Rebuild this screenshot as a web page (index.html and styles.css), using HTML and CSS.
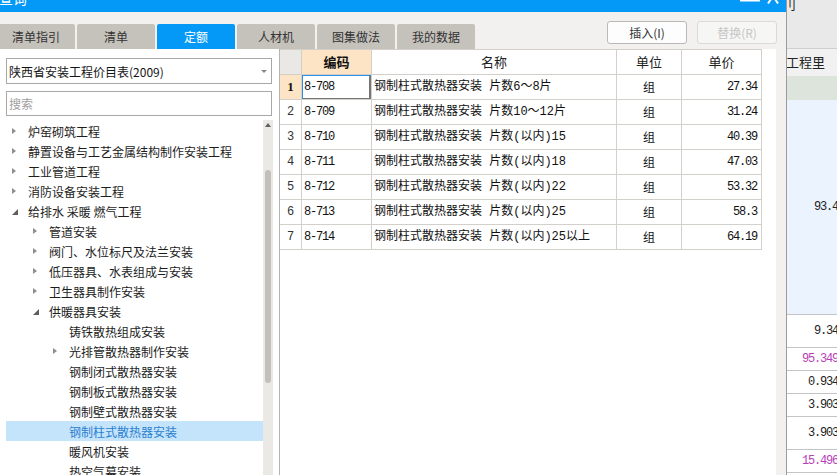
FILE: index.html
```html
<!DOCTYPE html>
<html lang="zh-CN">
<head>
<meta charset="utf-8">
<title>查询</title>
<link rel="stylesheet" href="styles.css">
</head>
<body>
<div class="screen">
  <div class="dialog">
    <div class="titlebar">
      <span class="title">查询</span>
      <svg class="winbtns" width="40" height="12" viewBox="0 0 40 12">
        <rect x="0" y="0" width="20" height="1.5" fill="#fff"/>
        <path d="M33 -4 L28 3.5 M33 -4 L38 3.5" stroke="#fff" stroke-width="2" fill="none"/>
      </svg>
    </div>
    <div class="toolbar">
      <div class="tabs">
        <div class="tab">清单指引</div>
        <div class="tab">清单</div>
        <div class="tab active">定额</div>
        <div class="tab">人材机</div>
        <div class="tab">图集做法</div>
        <div class="tab">我的数据</div>
      </div>
      <div class="actions">
        <button class="btn">插入(I)</button>
        <button class="btn disabled">替换(R)</button>
      </div>
    </div>
    <div class="content">
      <div class="left">
        <div class="select"><span>陕西省安装工程价目表(2009)</span><span class="caret"></span></div>
        <div class="search">搜索</div>
        <div class="treewrap">
          <ul class="tree">
            <li class="l0"><span class="arr"><i class="col"></i></span>炉窑砌筑工程</li>
            <li class="l0"><span class="arr"><i class="col"></i></span>静置设备与工艺金属结构制作安装工程</li>
            <li class="l0"><span class="arr"><i class="col"></i></span>工业管道工程</li>
            <li class="l0"><span class="arr"><i class="col"></i></span>消防设备安装工程</li>
            <li class="l0"><span class="arr"><i class="exp"></i></span>给排水 采暖 燃气工程</li>
            <li class="l1"><span class="arr"><i class="col"></i></span>管道安装</li>
            <li class="l1"><span class="arr"><i class="col"></i></span>阀门、水位标尺及法兰安装</li>
            <li class="l1"><span class="arr"><i class="col"></i></span>低压器具、水表组成与安装</li>
            <li class="l1"><span class="arr"><i class="col"></i></span>卫生器具制作安装</li>
            <li class="l1"><span class="arr"><i class="exp"></i></span>供暖器具安装</li>
            <li class="l2"><span class="arr"></span>铸铁散热组成安装</li>
            <li class="l2"><span class="arr"><i class="col"></i></span>光排管散热器制作安装</li>
            <li class="l2"><span class="arr"></span>钢制闭式散热器安装</li>
            <li class="l2"><span class="arr"></span>钢制板式散热器安装</li>
            <li class="l2"><span class="arr"></span>钢制壁式散热器安装</li>
            <li class="l2 sel"><span class="arr"></span>钢制柱式散热器安装</li>
            <li class="l2"><span class="arr"></span>暖风机安装</li>
            <li class="l2"><span class="arr"></span>热空气幕安装</li>
          </ul>
          <div class="scrollbar"><div class="up"></div><div class="thumb"></div></div>
        </div>
      </div>
      <div class="grid-area">
        <div class="row head">
          <div class="cell corner"></div>
          <div class="cell hcode">编码</div>
          <div class="cell hc">名称</div>
          <div class="cell hc">单位</div>
          <div class="cell hc">单价</div>
        </div>
        <div class="row">
          <div class="cell num cur">1</div>
          <div class="cell code focus">8-708</div>
          <div class="cell name">钢制柱式散热器安装 片数6～8片</div>
          <div class="cell unit">组</div>
          <div class="cell price">27.34</div>
        </div>
        <div class="row">
          <div class="cell num">2</div>
          <div class="cell code">8-709</div>
          <div class="cell name">钢制柱式散热器安装 片数10～12片</div>
          <div class="cell unit">组</div>
          <div class="cell price">31.24</div>
        </div>
        <div class="row">
          <div class="cell num">3</div>
          <div class="cell code">8-710</div>
          <div class="cell name">钢制柱式散热器安装 片数(以内)15</div>
          <div class="cell unit">组</div>
          <div class="cell price">40.39</div>
        </div>
        <div class="row">
          <div class="cell num">4</div>
          <div class="cell code">8-711</div>
          <div class="cell name">钢制柱式散热器安装 片数(以内)18</div>
          <div class="cell unit">组</div>
          <div class="cell price">47.03</div>
        </div>
        <div class="row">
          <div class="cell num">5</div>
          <div class="cell code">8-712</div>
          <div class="cell name">钢制柱式散热器安装 片数(以内)22</div>
          <div class="cell unit">组</div>
          <div class="cell price">53.32</div>
        </div>
        <div class="row">
          <div class="cell num">6</div>
          <div class="cell code">8-713</div>
          <div class="cell name">钢制柱式散热器安装 片数(以内)25</div>
          <div class="cell unit">组</div>
          <div class="cell price">58.3</div>
        </div>
        <div class="row">
          <div class="cell num">7</div>
          <div class="cell code">8-714</div>
          <div class="cell name">钢制柱式散热器安装 片数(以内)25以上</div>
          <div class="cell unit">组</div>
          <div class="cell price">64.19</div>
        </div>
      </div>
    </div>
  </div>
  <div class="bgapp">
    <div class="bg-top"><span class="bg-glyph">刂</span></div>
    <div class="bg-head">工程里</div>
    <div class="bg-green"></div>
    <div class="bg-blue"><span class="val">93.45</span></div>
    <div class="bg-row tall"><span class="val">9.345</span></div>
    <div class="bg-row"><span class="val pink">95.3496</span></div>
    <div class="bg-row"><span class="val">0.9345</span></div>
    <div class="bg-row"><span class="val">3.9035</span></div>
    <div class="bg-row tall"><span class="val">3.9035</span></div>
    <div class="bg-row"><span class="val pink">15.4968</span></div>
    <div class="bg-row"></div>
  </div>
</div>
</body>
</html>
```

FILE: styles.css
```css
html, body {
  margin: 0;
  padding: 0;
  background: #f2f1f0;
}
body {
  font-family: "Noto Sans CJK SC", "Noto Sans", sans-serif;
  font-size: 12px;
  color: #222;
}
.screen {
  width: 837px;
  height: 475px;
  overflow: hidden;
  display: flex;
}
.dialog {
  width: 786px;
  flex: none;
  height: 475px;
  border-right: 1px solid #9b9b9b;
  background: #f2f1f0;
  display: flex;
  flex-direction: column;
}
.titlebar {
  height: 12px;
  flex: none;
  background: #0599f7;
  display: flex;
  overflow: hidden;
}
.title {
  color: #fff;
  font-size: 14px;
  line-height: 14px;
  margin-top: -9px;
  margin-left: -1px;
}
.winbtns {
  margin-left: auto;
  margin-right: 6px;
}
.toolbar {
  height: 37px;
  flex: none;
  display: flex;
  align-items: flex-start;
}
.tabs {
  display: flex;
  gap: 2px;
  margin-left: -3px;
  margin-top: 12px;
}
.tab {
  width: 78px;
  height: 25px;
  line-height: 25px;
  text-align: center;
  background: #c5c2bc;
  border-radius: 2px 2px 0 0;
  color: #333;
  font-size: 12px;
}
.tab.active {
  background: #0599f7;
  color: #fff;
}
.actions {
  margin-left: auto;
  margin-top: 9px;
  margin-right: 9px;
  display: flex;
  gap: 10px;
}
.btn {
  width: 80px;
  height: 23px;
  padding: 0;
  border: 1px solid #b9b9b9;
  border-radius: 3px;
  background: #fdfdfd;
  font-family: "Noto Sans CJK SC", sans-serif;
  font-size: 12px;
  color: #333;
}
.btn.disabled {
  color: #c6c6c6;
  border-color: #dadada;
  background: #f6f6f5;
}
.content {
  flex: 1;
  min-height: 0;
  display: flex;
  padding-right: 10px;
}
.left {
  width: 280px;
  flex: none;
  box-sizing: border-box;
  border-right: 1px solid #b4b4b4;
  background: #fff;
  padding: 9px 6px 0 6px;
  display: flex;
  flex-direction: column;
  overflow: hidden;
}
.select {
  width: 266px;
  height: 26px;
  box-sizing: border-box;
  border: 1px solid #a8a8a8;
  display: flex;
  align-items: center;
  padding-left: 2px;
  color: #141414;
  flex: none;
}
.caret {
  margin-left: auto;
  margin-right: 4px;
  width: 0;
  height: 0;
  border-left: 3px solid transparent;
  border-right: 3px solid transparent;
  border-top: 3px solid #8a8a8a;
}
.search {
  width: 266px;
  height: 25px;
  box-sizing: border-box;
  margin-top: 7px;
  border: 1px solid #a8a8a8;
  padding-left: 2px;
  line-height: 23px;
  color: #a0a0a0;
  flex: none;
}
.treewrap {
  margin-top: 4px;
  flex: 1;
  min-height: 0;
  display: flex;
}
.tree {
  flex: 1;
  list-style: none;
  margin: 0;
  padding: 1px 0 0 0;
  overflow: hidden;
}
.tree li {
  height: 20px;
  display: flex;
  align-items: center;
  white-space: nowrap;
  color: #1c1c1c;
  font-size: 12px;
}
.tree li.l1 { padding-left: 21px; }
.tree li.l2 { padding-left: 41px; }
.tree li.sel {
  background: #c4e4fc;
  color: #2b7fd0;
}
.arr {
  width: 22px;
  flex: none;
  height: 20px;
  display: flex;
  align-items: center;
  padding-left: 6px;
  box-sizing: border-box;
}
.col {
  width: 0;
  height: 0;
  border-left: 4px solid #8e8e8e;
  border-top: 3.5px solid transparent;
  border-bottom: 3.5px solid transparent;
}
.exp {
  width: 0;
  height: 0;
  border-right: 6px solid #5e5e5e;
  border-top: 6px solid transparent;
  margin-top: 2px;
}
.scrollbar {
  width: 10px;
  flex: none;
  background: #ebe9e6;
  display: flex;
  flex-direction: column;
  align-items: center;
}
.up {
  margin-top: 3px;
  width: 0;
  height: 0;
  border-left: 3.5px solid transparent;
  border-right: 3.5px solid transparent;
  border-bottom: 4px solid #606060;
}
.thumb {
  margin-top: 43px;
  width: 6px;
  height: 213px;
  border-radius: 3px;
  background: #c3c0bb;
}
.grid-area {
  flex: 1;
  background: #fff;
  overflow: hidden;
}
.row {
  display: grid;
  grid-template-columns: 22px 70px 245px 65px 80px;
  height: 25px;
}
.row.head {
  height: 26px;
}
.cell {
  box-sizing: border-box;
  border-right: 1px solid #d3d0cb;
  border-bottom: 1px solid #d3d0cb;
  height: 25px;
  line-height: 24px;
  white-space: nowrap;
  overflow: hidden;
  font-size: 12px;
  color: #111;
}
.head .cell {
  height: 26px;
  border-top: 1px solid #d3d0cb;
  line-height: 24px;
  font-size: 13px;
  text-align: center;
  color: #222;
}
.head .corner {
  background: #e9e8e5;
}
.head .hcode {
  background: #fde4c5;
  font-weight: bold;
  color: #111;
}
.num {
  text-align: center;
  font-family: "Liberation Mono", monospace;
  font-size: 12px;
  color: #333;
}
.num.cur {
  background: #fde4c5;
  font-weight: bold;
  font-family: "Liberation Serif", serif;
  font-size: 13px;
  color: #111;
}
.code {
  padding-left: 2px;
  font-family: "Liberation Mono", monospace;
  font-size: 12px;
  letter-spacing: -1.2px;
}
.code.focus {
  box-shadow: inset 1px 1px 0 #2b8de6, inset -2px -1px 0 #767676;
}
.name {
  padding-left: 2px;
  font-family: "Liberation Mono", "Noto Sans CJK SC", monospace;
  font-size: 12px;
}
.unit {
  text-align: center;
}
.price {
  text-align: right;
  padding-right: 4px;
  font-family: "Liberation Mono", monospace;
  font-size: 12px;
  letter-spacing: -1.2px;
}
.bgapp {
  width: 50px;
  flex: none;
  overflow: hidden;
  background: #e9e9e9;
  display: flex;
  flex-direction: column;
}
.bgapp > div {
  width: 57px;
  flex: none;
  box-sizing: border-box;
}
.bg-top {
  height: 49px;
  border-bottom: 1px solid #d0d0d0;
  overflow: hidden;
}
.bg-glyph {
  display: block;
  font-size: 13px;
  line-height: 13px;
  margin-top: -3px;
  margin-left: -4px;
  color: #222;
}
.bg-head {
  height: 27px;
  background: #f1f1f1;
  font-size: 13px;
  line-height: 25px;
  white-space: nowrap;
  color: #222;
  margin-left: -1px;
}
.bg-green {
  height: 24px;
  background: #dce4dc;
}
.bg-blue {
  height: 215px;
  background: #eaf3fe;
  border-bottom: 1px solid #c4c4c4;
  display: flex;
  align-items: center;
  justify-content: flex-end;
}
.bg-row {
  height: 23px;
  background: #fff;
  border-bottom: 1px solid #c4c4c4;
  display: flex;
  align-items: center;
  justify-content: flex-end;
}
.bg-row.tall {
  height: 33px;
}
.val {
  font-family: "Liberation Mono", monospace;
  font-size: 12px;
  letter-spacing: -1.2px;
  color: #222;
}
.val.pink {
  color: #b73fb7;
}
```
